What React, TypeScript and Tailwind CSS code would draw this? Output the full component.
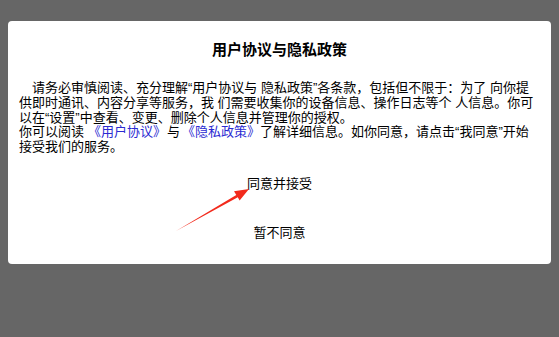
export default function App() {
  const font = { fontFamily: '"Liberation Sans", "Noto Sans CJK SC", sans-serif' };
  return (
    <div className="h-[337px] w-[559px] bg-[#666666] pt-[21px] pl-[8px] pr-[8px]" style={font}>
      <div className="relative h-[243px] rounded-[4px] bg-white px-[11px]">
        <h2 className="pt-[19px] text-center text-[15px] font-bold leading-[20px] text-black">用户协议与隐私政策</h2>
        <p className="mt-[21px] whitespace-nowrap text-[13px] leading-[14.8px] text-black">
          <span className="pl-[13px]">请务必审慎阅读、充分理解“用户协议与 隐私政策”各条款，包括但不限于：为了 向你提</span>
          <br />
          供即时通讯、内容分享等服务，我 们需要收集你的设备信息、操作日志等个 人信息。你可
          <br />
          以在“设置”中查看、变更、删除个人信息并管理你的授权。
          <br />
          你可以阅读<span className="ml-[4px] mr-[1px] text-[#2b2bd2]">《用户协议》</span>与<span className="ml-[2px] text-[#2b2bd2]">《隐私政策》</span>了解详细信息。如你同意，请点击“我同意”开始
          <br />
          接受我们的服务。
        </p>
        <div className="mt-[4px] flex flex-col">
          <button className="flex h-[49px] items-center justify-center text-[13px] text-black">同意并接受</button>
          <button className="flex h-[49px] items-center justify-center text-[13px] text-black">暂不同意</button>
        </div>
        {/* red annotation arrow */}
        <svg className="pointer-events-none absolute left-[-8px] top-[-21px]" width="559" height="337" viewBox="0 0 559 337">
          <polygon points="176,231 236.3,195 234,191.3 249,189 239.6,200.6 237.8,197.2" fill="#f22a1c" />
        </svg>
      </div>
    </div>
  );
}
